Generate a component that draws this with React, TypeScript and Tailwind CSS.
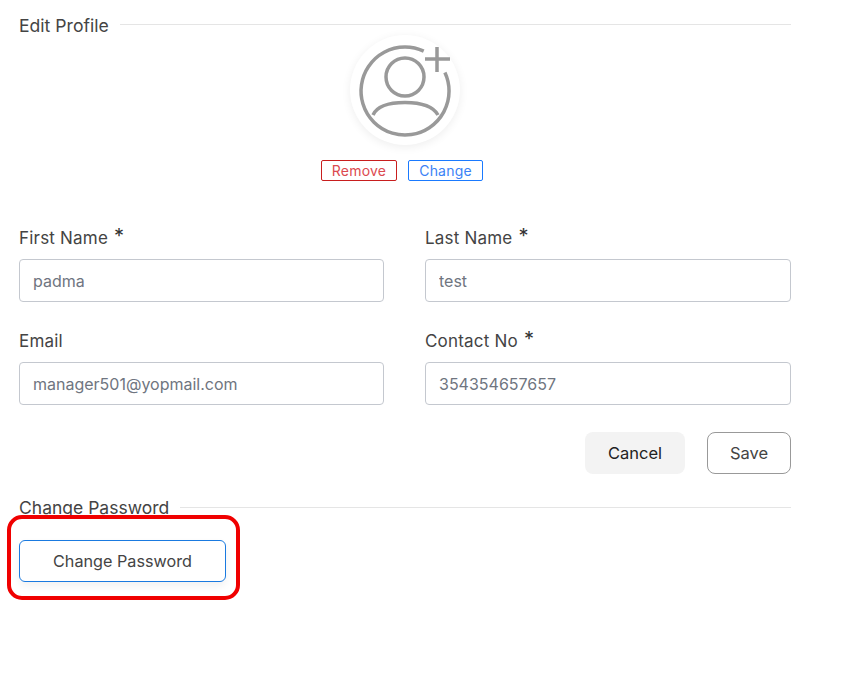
function Required() {
  return <span className="relative -top-[1px] ml-[6px] text-[20px] leading-none text-[#333]">*</span>;
}

function Field({ label, value, required }: { label: string; value: string; required?: boolean }) {
  return (
    <div>
      <label className="block h-[24px] text-[17px] leading-[24px] tracking-[0.2px] text-[#444]">
        {label}
        {required && <Required />}
      </label>
      <input
        readOnly
        value={value}
        className="mt-[9px] block h-[43px] w-full rounded-[4px] border border-[#c4c8cf] bg-white px-[13px] text-[16px] text-[#6f7580] outline-none"
      />
    </div>
  );
}

function AvatarIcon() {
  return (
    <svg width="110" height="110" viewBox="0 0 110 110" fill="none" stroke="#999999" strokeWidth="3.5">
      <path d="M73.7 16.2 A44 44 0 1 0 94.9 37.4" />
      <path d="M75 24 H100 M87 12 V37" />
      <circle cx="55" cy="42" r="19" />
      <path d="M23 80 C27 71 40 67.5 55 67.5 S83 71 88 80" />
    </svg>
  );
}

export default function App() {
  return (
    <div className="relative min-h-[685px] w-[847px] bg-white font-['Inter',sans-serif]">
      <div className="w-[791px] pl-[19px]">
        <div className="flex items-start gap-[11px] pt-[14px]">
          <h2 className="text-[17.6px] leading-[24px] text-[#444]">Edit Profile</h2>
          <div className="mt-[10px] h-px flex-1 bg-[#e5e5e5]" />
        </div>

        <div className="flex flex-col items-center">
          <div className="-mt-[3px] rounded-full bg-white shadow-[0_2px_10px_rgba(0,0,0,0.07)]">
            <AvatarIcon />
          </div>
          <div className="mr-[6px] mt-[15px] flex gap-[11px]">
            <button className="h-[21px] w-[76px] rounded-[2px] border border-[#c81e1e] text-[14px] leading-none tracking-[0.2px] text-[#dc4a50]">
              Remove
            </button>
            <button className="h-[21px] w-[75px] rounded-[2px] border border-[#1a7aff] text-[14px] leading-none tracking-[0.2px] text-[#3b82f6]">
              Change
            </button>
          </div>
        </div>

        <div className="mt-[45px] grid grid-cols-[365px_366px] gap-x-[41px] gap-y-[27px]">
          <Field label="First Name" value="padma" required />
          <Field label="Last Name" value="test" required />
          <Field label="Email" value="manager501@yopmail.com" />
          <Field label="Contact No" value="354354657657" required />
        </div>

        <div className="mt-[27px] flex justify-end gap-[22px]">
          <button className="h-[42px] w-[100px] rounded-[8px] bg-[#f3f3f3] text-[16.5px] text-[#222]">Cancel</button>
          <button className="h-[42px] w-[84px] rounded-[8px] border border-[#999] bg-white text-[16.5px] text-[#444]">
            Save
          </button>
        </div>

        <div className="mt-[21px] flex items-center gap-[11px]">
          <h2 className="h-[24px] text-[17.5px] leading-[26px] text-[#444]">Change Password</h2>
          <div className="h-px flex-1 bg-[#e5e5e5]" />
        </div>

        <button className="mt-[21px] h-[42px] w-[207px] rounded-[6px] border border-[#1a7ae0] bg-white text-[16.2px] text-[#444] shadow-[0_4px_8px_rgba(0,0,0,0.06)]">
          Change Password
        </button>
      </div>

      {/* red annotation from the screenshot */}
      <div className="pointer-events-none absolute left-[7px] top-[515px] h-[85px] w-[233px] rounded-[15px] border-[4px] border-[#f00000]" />
    </div>
  );
}
